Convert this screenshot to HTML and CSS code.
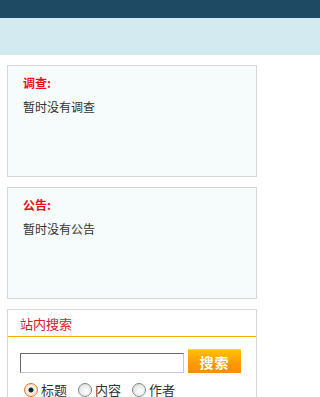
FILE: index.html
```html
<!DOCTYPE html>
<html>
<head>
<meta charset="utf-8">
<link rel="stylesheet" href="styles.css">
</head>
<body>
<div class="topbar"></div>
<div class="band"></div>
<div class="content">
  <div class="box">
    <div class="box-title">调查:</div>
    <div class="box-text">暂时没有调查</div>
  </div>
  <div class="box">
    <div class="box-title">公告:</div>
    <div class="box-text">暂时没有公告</div>
  </div>
  <div class="search">
    <div class="search-head">站内搜索</div>
    <div class="search-body">
      <div class="search-row">
        <div class="search-input"></div>
        <div class="search-btn">搜索</div>
      </div>
      <div class="radio-row">
        <span class="radio checked"></span><span class="radio-label">标题</span>
        <span class="radio"></span><span class="radio-label">内容</span>
        <span class="radio"></span><span class="radio-label">作者</span>
      </div>
    </div>
  </div>
</div>
</body>
</html>
```
FILE: styles.css
```css
html, body {
  margin: 0;
  padding: 0;
  background: #fff;
  font-family: "Noto Sans CJK SC", "Noto Sans", sans-serif;
  font-size: 12px;
  color: #333;
  overflow: hidden;
}
.topbar {
  height: 18px;
  background: #1e4a64;
}
.band {
  height: 37px;
  background: #d3eaf0;
}
.content {
  display: flex;
  flex-direction: column;
  gap: 10px;
  width: 250px;
  padding: 10px 0 0 7px;
}
.box {
  height: 110px;
  border: 1px solid #d6d6d6;
  background: #f6fcfc;
  padding: 0 15px;
}
.box-title {
  margin-top: 9px;
  line-height: 16px;
  font-weight: bold;
  color: #e8101e;
}
.box-text {
  margin-top: 8px;
  line-height: 16px;
  color: #333;
}
.search {
  border: 1px solid #d6d6d6;
  background: #fff;
  height: 120px;
}
.search-head {
  height: 26px;
  line-height: 28px;
  padding-left: 12px;
  font-size: 13px;
  color: #d4202c;
  border-bottom: 1px solid #f5ac00;
}
.search-body {
  padding: 12px 0 0 12px;
}
.search-row {
  display: flex;
  align-items: center;
  gap: 4px;
}
.search-input {
  width: 162px;
  height: 18px;
  border: 1px solid;
  border-color: #6a6a6a #c8c8c8 #c8c8c8 #6a6a6a;
  background: #fff;
  margin-top: 4px;
}
.search-btn {
  width: 53px;
  height: 24px;
  line-height: 24px;
  text-align: center;
  color: #fff;
  font-weight: bold;
  font-size: 14px;
  letter-spacing: 1px;
  background: linear-gradient(#ffc200, #ff9a00 55%, #ff8c00);
  border-top: 1px solid #ffd24a;
  box-sizing: border-box;
}
.radio-row {
  display: flex;
  align-items: center;
  margin-top: 9px;
  padding-left: 4px;
  font-size: 13px;
  color: #333;
}
.radio {
  width: 12px;
  height: 12px;
  border: 1px solid #7a8a99;
  border-radius: 50%;
  background: radial-gradient(circle at 60% 60%, #ffffff 0%, #e8e8e4 60%, #cfcfc8 100%);
  margin-right: 3px;
}
.radio.checked {
  border-color: #e07a2a;
  background: radial-gradient(circle, #222 0, #222 2px, #f8f8f8 3px, #f4c8a0 100%);
}
.radio-label {
  margin-right: 11px;
  line-height: 16px;
}
```
